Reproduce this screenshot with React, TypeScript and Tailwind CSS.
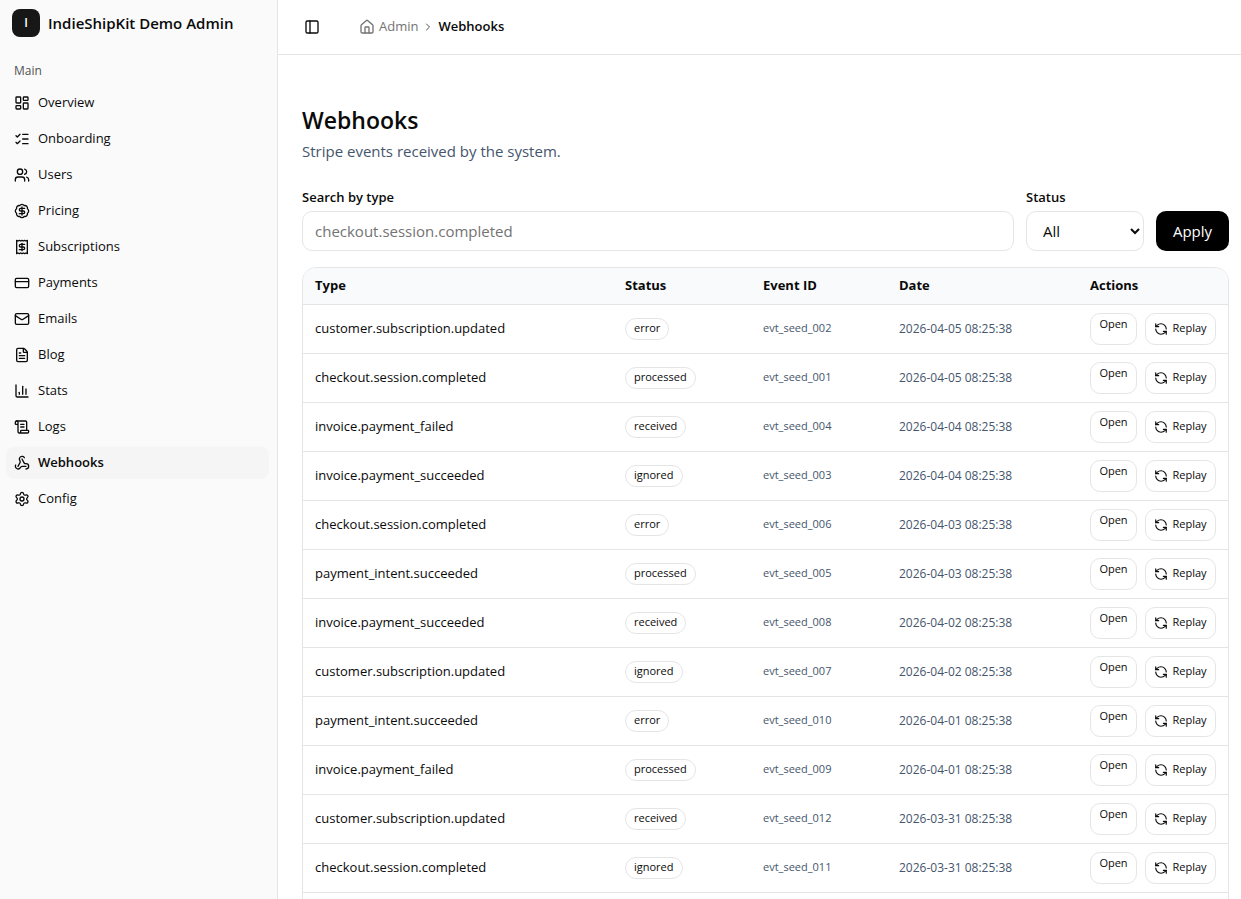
import {
  BadgeDollarSign,
  ChartColumn,
  ChevronRight,
  CreditCard,
  FileText,
  House,
  LayoutDashboard,
  ListChecks,
  Mail,
  PanelLeft,
  RefreshCcw,
  ScrollText,
  Settings,
  Users,
  Webhook,
} from 'lucide-react';
import type { ComponentType } from 'react';

interface NavItem {
  label: string;
  icon: ComponentType<{ className?: string }>;
}

interface WebhookEvent {
  id: string;
  type: string;
  status: string;
  date: string;
}

// Receipt with a dollar sign and serrated top and bottom edges
function ReceiptDollar({ className }: { className?: string }) {
  return (
    <svg
      className={className}
      viewBox="0 0 24 24"
      fill="none"
      stroke="currentColor"
      strokeWidth={2}
      strokeLinecap="round"
      strokeLinejoin="round"
      aria-hidden="true"
    >
      <path d="M4 2v20l2-1 2 1 2-1 2 1 2-1 2 1 2-1 2 1V2l-2 1-2-1-2 1-2-1-2 1-2-1-2 1Z" />
      <path d="M16 8h-6a2 2 0 1 0 0 4h4a2 2 0 1 1 0 4H8" />
      <path d="M12 17.5v-11" />
    </svg>
  );
}

const navItems: NavItem[] = [
  { label: 'Overview', icon: LayoutDashboard },
  { label: 'Onboarding', icon: ListChecks },
  { label: 'Users', icon: Users },
  { label: 'Pricing', icon: BadgeDollarSign },
  { label: 'Subscriptions', icon: ReceiptDollar },
  { label: 'Payments', icon: CreditCard },
  { label: 'Emails', icon: Mail },
  { label: 'Blog', icon: FileText },
  { label: 'Stats', icon: ChartColumn },
  { label: 'Logs', icon: ScrollText },
  { label: 'Webhooks', icon: Webhook },
  { label: 'Config', icon: Settings },
];

const events: WebhookEvent[] = [
  { id: 'evt_seed_002', type: 'customer.subscription.updated', status: 'error', date: '2026-04-05 08:25:38' },
  { id: 'evt_seed_001', type: 'checkout.session.completed', status: 'processed', date: '2026-04-05 08:25:38' },
  { id: 'evt_seed_004', type: 'invoice.payment_failed', status: 'received', date: '2026-04-04 08:25:38' },
  { id: 'evt_seed_003', type: 'invoice.payment_succeeded', status: 'ignored', date: '2026-04-04 08:25:38' },
  { id: 'evt_seed_006', type: 'checkout.session.completed', status: 'error', date: '2026-04-03 08:25:38' },
  { id: 'evt_seed_005', type: 'payment_intent.succeeded', status: 'processed', date: '2026-04-03 08:25:38' },
  { id: 'evt_seed_008', type: 'invoice.payment_succeeded', status: 'received', date: '2026-04-02 08:25:38' },
  { id: 'evt_seed_007', type: 'customer.subscription.updated', status: 'ignored', date: '2026-04-02 08:25:38' },
  { id: 'evt_seed_010', type: 'payment_intent.succeeded', status: 'error', date: '2026-04-01 08:25:38' },
  { id: 'evt_seed_009', type: 'invoice.payment_failed', status: 'processed', date: '2026-04-01 08:25:38' },
  { id: 'evt_seed_012', type: 'customer.subscription.updated', status: 'received', date: '2026-03-31 08:25:38' },
  { id: 'evt_seed_011', type: 'checkout.session.completed', status: 'ignored', date: '2026-03-31 08:25:38' },
  { id: 'evt_seed_014', type: 'invoice.payment_failed', status: 'error', date: '2026-03-30 08:25:38' },
];

function Sidebar() {
  return (
    <aside className="w-[278px] shrink-0 border-r border-neutral-200 bg-neutral-50">
      <div className="flex h-[46px] items-center gap-2 px-3">
        <div className="flex size-7 items-center justify-center rounded-lg bg-neutral-900 text-xs font-semibold text-white">
          I
        </div>
        <span className="text-[15px] font-semibold">IndieShipKit Demo Admin</span>
      </div>
      <nav className="pt-[9px] pr-2 pl-1.5" aria-label="Main">
        <div className="flex h-8 items-center px-2 text-xs font-medium text-neutral-600">Main</div>
        <ul className="flex flex-col gap-1">
          {navItems.map(({ label, icon: Icon }) => {
            const active = label === 'Webhooks';
            return (
              <li key={label}>
                <a
                  href="#"
                  aria-current={active ? 'page' : undefined}
                  className={
                    active
                      ? 'flex h-8 items-center gap-2 rounded-lg bg-neutral-100 px-2 text-[13px] font-semibold'
                      : 'flex h-8 items-center gap-2 rounded-lg px-2 text-[13px]'
                  }
                >
                  <Icon className="size-4 shrink-0" />
                  {label}
                </a>
              </li>
            );
          })}
        </ul>
      </nav>
    </aside>
  );
}

function Header() {
  return (
    <header className="flex h-[55px] items-center border-b border-neutral-200 px-5">
      <button type="button" aria-label="Toggle sidebar" className="flex size-7 items-center justify-center">
        <PanelLeft className="size-4" />
      </button>
      <nav aria-label="Breadcrumb" className="ml-[33px] flex items-center gap-1 text-[13px]">
        <a href="#" className="flex items-center gap-1 text-neutral-500">
          <House className="size-4" />
          Admin
        </a>
        <ChevronRight className="size-3 text-neutral-600" />
        <span className="font-semibold">Webhooks</span>
      </nav>
    </header>
  );
}

function Filters() {
  return (
    <form className="flex items-end gap-3" onSubmit={(e) => e.preventDefault()}>
      <div className="flex flex-1 flex-col gap-1">
        <label htmlFor="type" className="text-[13px] leading-5 font-semibold">
          Search by type
        </label>
        <input
          id="type"
          type="text"
          placeholder="checkout.session.completed"
          className="h-10 w-full rounded-[10px] border border-neutral-200 px-3 text-[15px] placeholder:text-neutral-500"
        />
      </div>
      <div className="flex flex-col gap-1">
        <label htmlFor="status" className="text-[13px] leading-5 font-semibold">
          Status
        </label>
        <select
          id="status"
          className="h-10 w-[118px] rounded-[10px] border border-neutral-200 bg-white pl-3 text-[15px]"
        >
          <option>All</option>
          <option>received</option>
          <option>processed</option>
          <option>ignored</option>
          <option>error</option>
        </select>
      </div>
      <button type="submit" className="h-10 w-[73px] rounded-[10px] bg-black text-[15px] text-white">
        Apply
      </button>
    </form>
  );
}

function EventsTable() {
  return (
    <div className="overflow-hidden rounded-[14px] border border-neutral-200">
      <table className="w-full table-fixed text-left text-[13px]">
        <colgroup>
          <col />
          <col className="w-[138px]" />
          <col className="w-[136px]" />
          <col className="w-[191px]" />
          <col className="w-[150px]" />
        </colgroup>
        <thead className="bg-slate-50">
          <tr className="h-9 border-b border-neutral-200">
            <th className="px-3 font-bold">Type</th>
            <th className="px-3 font-bold">Status</th>
            <th className="px-3 font-bold">Event ID</th>
            <th className="px-3 font-bold">Date</th>
            <th className="px-3 font-bold">Actions</th>
          </tr>
        </thead>
        <tbody>
          {events.map((event) => (
            <tr key={event.id} className="h-[49px] border-b border-neutral-200">
              <td className="px-3">{event.type}</td>
              <td className="px-3">
                <span className="inline-flex h-[22px] items-center rounded-full border border-neutral-200 px-2 text-[11px]">
                  {event.status}
                </span>
              </td>
              <td className="px-3 text-[11px] text-slate-600">{event.id}</td>
              <td className="px-3 text-xs text-slate-600">{event.date}</td>
              <td className="px-3">
                <div className="flex gap-2">
                  <a
                    href="#"
                    className="flex h-8 w-[47px] justify-center rounded-[10px] border border-neutral-200 text-[11px] leading-5"
                  >
                    Open
                  </a>
                  <button
                    type="button"
                    className="flex h-8 w-[71px] items-center justify-center gap-1 rounded-[10px] border border-neutral-200 text-[11px]"
                  >
                    <RefreshCcw className="size-3.5" />
                    Replay
                  </button>
                </div>
              </td>
            </tr>
          ))}
        </tbody>
      </table>
    </div>
  );
}

export default function App() {
  return (
    <div className="flex min-h-screen bg-white font-['Open_Sans',sans-serif] text-neutral-950">
      <Sidebar />
      <div className="min-w-0 flex-1">
        <Header />
        <main className="flex flex-col gap-4 pt-12 pr-3 pb-6 pl-6">
          <div className="mb-2">
            <h1 className="text-[23px] leading-[34px] font-semibold">Webhooks</h1>
            <p className="mt-0.5 text-[15px] leading-6 text-slate-600">Stripe events received by the system.</p>
          </div>
          <Filters />
          <EventsTable />
        </main>
      </div>
    </div>
  );
}
